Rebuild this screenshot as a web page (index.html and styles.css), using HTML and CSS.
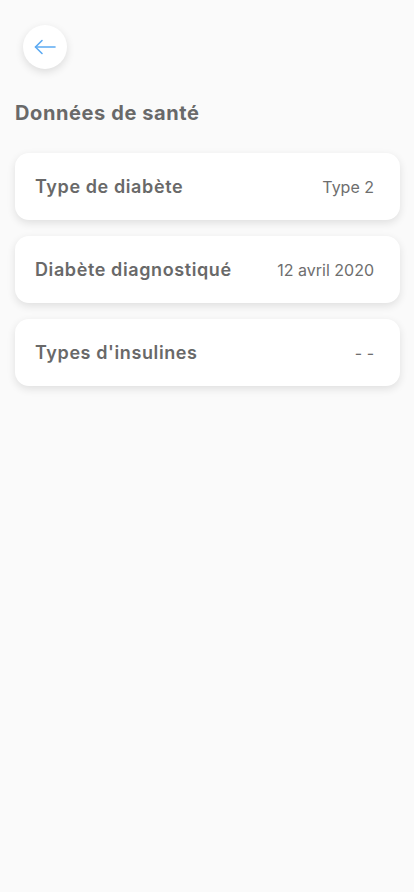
FILE: index.html
```html
<!DOCTYPE html>
<html lang="fr">
<head>
  <meta charset="UTF-8">
  <meta name="viewport" content="width=device-width, initial-scale=1.0">
  <title>Données de santé</title>
  <link rel="stylesheet" href="styles.css">
</head>
<body>
  <div class="container">
    <!-- Header -->
    <button class="back-btn" aria-label="Retour">
      <svg width="22" height="16" viewBox="0 0 22 16" fill="none" stroke="#5caaf2" stroke-width="1.6" stroke-linecap="round" stroke-linejoin="round">
        <path d="M21 8H1.5"/>
        <path d="M8 1.5L1.5 8L8 14.5"/>
      </svg>
    </button>

    <h2>Données de santé</h2>

    <!-- Health data -->
    <div class="list">
      <div class="card">
        <span class="label">Type de diabète</span>
        <span class="value">Type 2</span>
      </div>
      <div class="card">
        <span class="label">Diabète diagnostiqué</span>
        <span class="value">12 avril 2020</span>
      </div>
      <div class="card">
        <span class="label">Types d'insulines</span>
        <span class="value">- -</span>
      </div>
    </div>
  </div>
</body>
</html>
```

FILE: styles.css
```css
* {
  margin: 0;
  padding: 0;
  box-sizing: border-box;
  font-family: Inter, "Open Sans", sans-serif;
}
body {
  background: #fafafa;
  color: #696969;
  min-height: 892px;
}
.container {
  padding: 25px 14px 20px 15px;
}
.back-btn {
  width: 44px;
  height: 44px;
  margin-left: 8px;
  border: none;
  border-radius: 50%;
  background: #fff;
  box-shadow: 0 3px 8px rgba(0, 0, 0, 0.12);
  display: flex;
  align-items: center;
  justify-content: center;
  cursor: pointer;
}
h2 {
  margin-top: 32px;
  font-size: 20px;
  font-weight: 700;
  letter-spacing: 0.6px;
  color: #696969;
  line-height: 24px;
}
.list {
  margin-top: 28px;
  display: flex;
  flex-direction: column;
  gap: 16px;
}
.card {
  height: 67px;
  background: #fff;
  border-radius: 14px;
  box-shadow: 0 3px 9px rgba(0, 0, 0, 0.11);
  display: flex;
  align-items: center;
  justify-content: space-between;
  padding: 0 26px 0 20px;
}
.label {
  font-size: 18px;
  font-weight: 600;
  letter-spacing: 0.6px;
  color: #696969;
  line-height: 24px;
  padding-top: 1px;
}
.value {
  font-size: 16px;
  font-weight: 400;
  color: #6e6e6e;
  line-height: 24px;
  padding-top: 1px;
}
```
